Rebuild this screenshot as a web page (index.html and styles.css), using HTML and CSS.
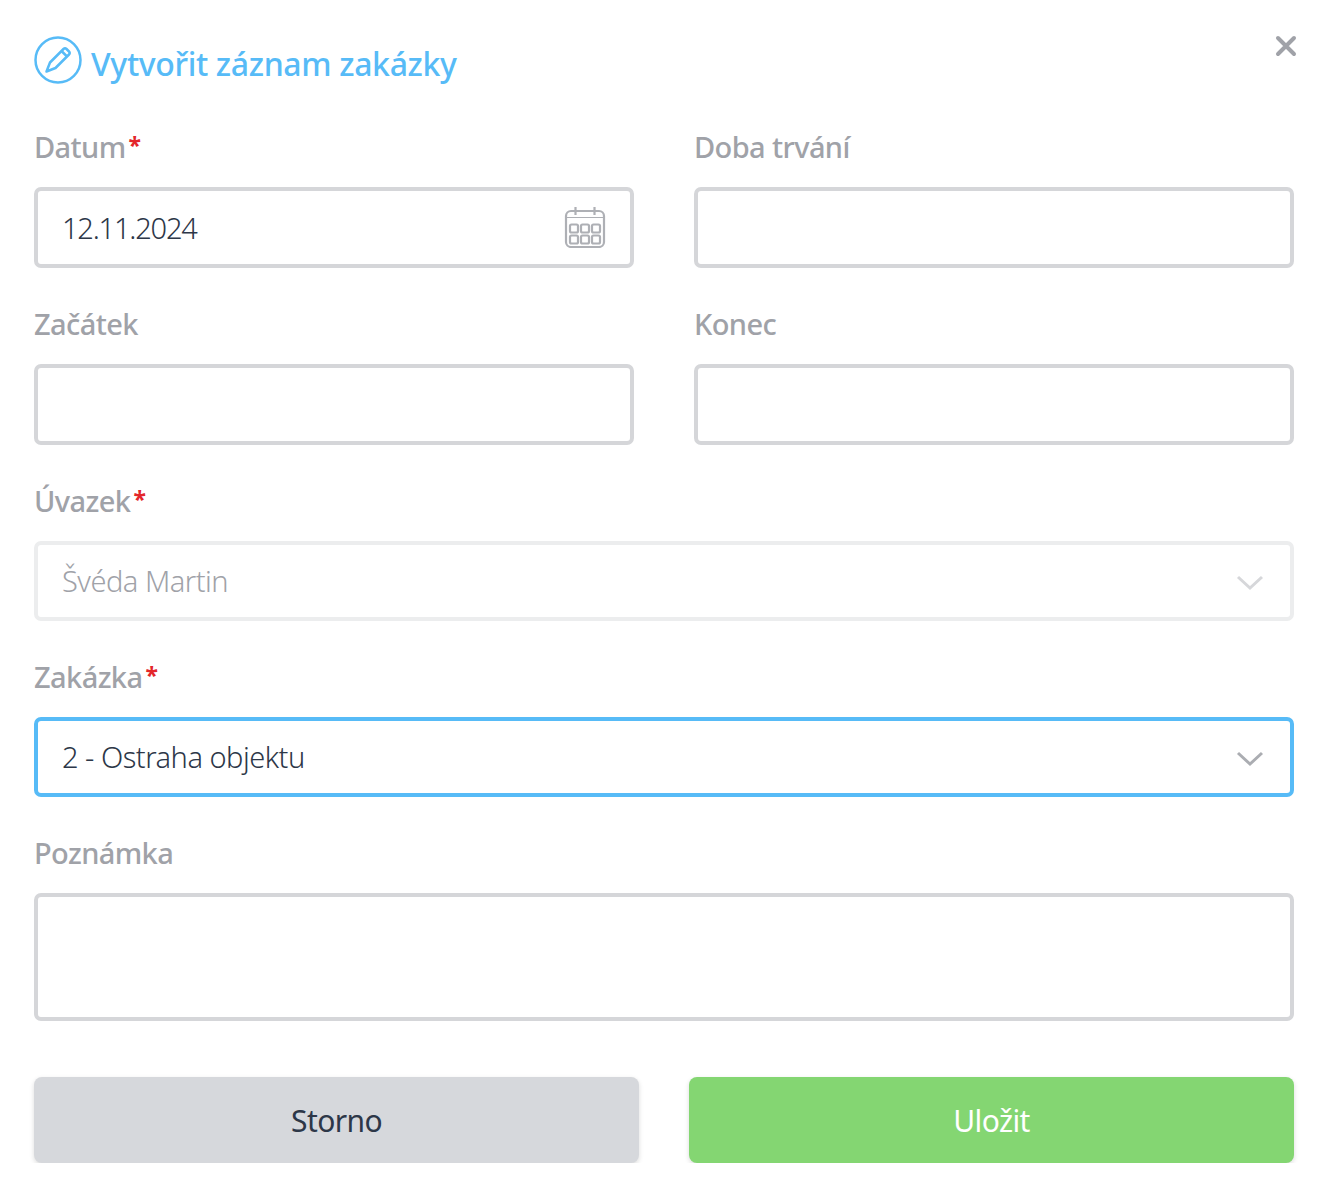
FILE: index.html
```html
<!DOCTYPE html>
<html lang="cs">
  <head>
    <meta charset="UTF-8" />
    <title>Vytvořit záznam zakázky</title>
    <link rel="stylesheet" href="styles.css">
  </head>
  <body>
    <div class="modal">
      <button class="close" aria-label="Zavřít">
        <svg width="22" height="22" viewBox="0 0 22 22"><path d="M3 3 L19 19 M19 3 L3 19" stroke="#a0a2a8" stroke-width="4" stroke-linecap="round" fill="none"/></svg>
      </button>

      <h1 class="title">
        <svg class="title-icon" width="48" height="48" viewBox="0 0 48 48" fill="none" stroke="#57bbf7" stroke-width="2.5" stroke-linejoin="round">
          <circle cx="24" cy="24" r="22.5"/>
          <path d="M12.5 35.5 L16 26.5 L29.5 13 Q31 11.5 32.5 13 L35 15.5 Q36.5 17 35 18.5 L21.5 32 Z"/>
          <path d="M27.5 15 L33 20.5"/>
        </svg>
        Vytvořit záznam zakázky
      </h1>

      <form class="form">
        <div class="row">
          <div class="field">
            <label>Datum<span class="req">*</span></label>
            <div class="input">
              <span class="value-date">12.11.2024</span>
              <svg class="calendar" width="42" height="42" viewBox="0 0 42 42" fill="none" stroke="#aeb0b5" stroke-width="2.2">
                <rect x="2" y="5" width="38" height="36" rx="5"/>
                <path d="M2 11.5 H40" stroke-width="1.2"/>
                <path d="M11.5 1 V9 M30.5 1 V9"/>
                <rect x="6" y="18.5" width="8" height="8" rx="1.5"/>
                <rect x="17" y="18.5" width="8" height="8" rx="1.5"/>
                <rect x="28" y="18.5" width="8" height="8" rx="1.5"/>
                <rect x="6" y="29.5" width="8" height="8" rx="1.5"/>
                <rect x="17" y="29.5" width="8" height="8" rx="1.5"/>
                <rect x="28" y="29.5" width="8" height="8" rx="1.5"/>
              </svg>
            </div>
          </div>
          <div class="field">
            <label>Doba trvání</label>
            <div class="input"></div>
          </div>
        </div>

        <div class="row">
          <div class="field">
            <label>Začátek</label>
            <div class="input"></div>
          </div>
          <div class="field">
            <label>Konec</label>
            <div class="input"></div>
          </div>
        </div>

        <div class="field">
          <label>Úvazek<span class="req">*</span></label>
          <div class="input select disabled">
            <span class="value">Švéda Martin</span>
            <svg class="chevron" width="28" height="16" viewBox="0 0 28 16"><path d="M2 2 L14 13 L26 2" fill="none" stroke="#d6d7da" stroke-width="3"/></svg>
          </div>
        </div>

        <div class="field">
          <label>Zakázka<span class="req">*</span></label>
          <div class="input select focused">
            <span class="value">2 - Ostraha objektu</span>
            <svg class="chevron" width="28" height="16" viewBox="0 0 28 16"><path d="M2 2 L14 13 L26 2" fill="none" stroke="#abadb2" stroke-width="3"/></svg>
          </div>
        </div>

        <div class="field">
          <label>Poznámka</label>
          <div class="input note"></div>
        </div>

        <div class="actions">
          <button type="button" class="btn btn-cancel">Storno</button>
          <button type="button" class="btn btn-save">Uložit</button>
        </div>
      </form>
    </div>
  </body>
</html>
```

FILE: styles.css
```css
body {
  margin: 0;
  background-color: #fff;
  font-family: "Noto Sans", sans-serif;
  color: #2d3748;
}

.modal {
  position: relative;
  padding: 36px 36px 0 34px;
}

.close {
  position: absolute;
  top: 35px;
  right: 33px;
  padding: 0;
  border: none;
  background: none;
  line-height: 0;
}

.title {
  display: flex;
  align-items: center;
  gap: 9px;
  margin: 0;
  height: 54px;
  font-size: 32px;
  font-weight: 500;
  color: #57bbf7;
  letter-spacing: -0.35px;
}

.title-icon {
  margin-bottom: 6px;
}

.form {
  margin-top: 36px;
  display: flex;
  flex-direction: column;
  gap: 35px;
}

.row {
  display: grid;
  grid-template-columns: 1fr 1fr;
  gap: 60px;
}

label {
  display: block;
  height: 61px;
  font-size: 29px;
  line-height: 42px;
  font-weight: 500;
  color: #a0a2a8;
  letter-spacing: -0.6px;
}

.req {
  color: #e3262b;
  margin-left: 3px;
  font-size: 23px;
  font-weight: 700;
  line-height: 0;
  vertical-align: 4px;
}

.input {
  box-sizing: border-box;
  height: 81px;
  display: flex;
  align-items: center;
  justify-content: space-between;
  padding: 0 24px;
  border: 4px solid #d5d6d9;
  border-radius: 7px;
  font-size: 29px;
  font-weight: 300;
  letter-spacing: -0.5px;
}

.input svg {
  flex-shrink: 0;
}

.value-date {
  letter-spacing: -1.2px;
}

.calendar {
  margin-bottom: 2px;
}

.select {
  height: 80px;
  padding-right: 26px;
}

.select .value {
  margin-bottom: 2px;
}

.chevron {
  margin-top: 3px;
}

.disabled {
  border-color: #ecedee;
  color: #a0a2a8;
}

.focused {
  border-color: #57bbf7;
}

.note {
  height: 128px;
}

.actions {
  display: grid;
  grid-template-columns: 1fr 1fr;
  gap: 50px;
  margin-top: 21px;
}

.btn {
  height: 86px;
  border: none;
  border-radius: 8px;
  font-family: "Noto Sans", sans-serif;
  font-size: 30px;
  letter-spacing: -0.6px;
  box-shadow: 0 2px 5px rgba(0, 0, 0, 0.14);
}

.btn-cancel {
  background-color: #d6d8dc;
  color: #2d3748;
}

.btn-save {
  background-color: #84d672;
  color: #fff;
}
```
